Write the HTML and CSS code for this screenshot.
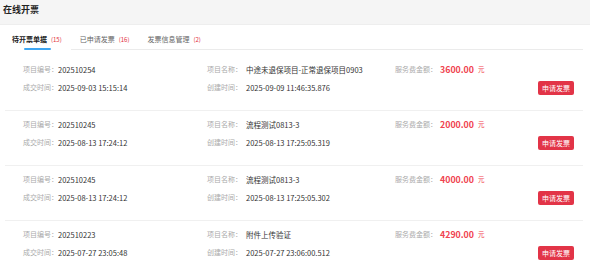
FILE: index.html
```html
<!DOCTYPE html>
<html lang="zh-CN">
<head>
<meta charset="utf-8">
<title>在线开票</title>
<link rel="stylesheet" href="styles.css">
</head>
<body>
<div class="header"><h1 class="title">在线开票</h1></div>
<div class="content">
  <div class="tabs">
    <div class="tab active">待开票单据<span class="count">(15)</span></div>
    <div class="tab">已申请发票<span class="count">(16)</span></div>
    <div class="tab">发票信息管理<span class="count">(2)</span></div>
    <div class="tab-fill"></div>
  </div>
  <div class="list">
    <div class="row">
      <div class="cell c1"><span class="label">项目编号：</span><span class="val">202510254</span></div>
      <div class="cell c2"><span class="label l2">项目名称：</span><span class="val">中途未退保项目-正常退保项目0903</span></div>
      <div class="cell c3"><span class="label">服务费金额：</span><span class="amount">3600.00</span><span class="unit">元</span></div>
      <div class="cell c4"></div>
      <div class="cell c1"><span class="label">成交时间：</span><span class="val">2025-09-03 15:15:14</span></div>
      <div class="cell c2"><span class="label l2">创建时间：</span><span class="val">2025-09-09 11:46:35.876</span></div>
      <div class="cell c3"></div>
      <div class="cell c4"><button class="btn">申请发票</button></div>
    </div>
    <div class="row">
      <div class="cell c1"><span class="label">项目编号：</span><span class="val">202510245</span></div>
      <div class="cell c2"><span class="label l2">项目名称：</span><span class="val">流程测试0813-3</span></div>
      <div class="cell c3"><span class="label">服务费金额：</span><span class="amount">2000.00</span><span class="unit">元</span></div>
      <div class="cell c4"></div>
      <div class="cell c1"><span class="label">成交时间：</span><span class="val">2025-08-13 17:24:12</span></div>
      <div class="cell c2"><span class="label l2">创建时间：</span><span class="val">2025-08-13 17:25:05.319</span></div>
      <div class="cell c3"></div>
      <div class="cell c4"><button class="btn">申请发票</button></div>
    </div>
    <div class="row">
      <div class="cell c1"><span class="label">项目编号：</span><span class="val">202510245</span></div>
      <div class="cell c2"><span class="label l2">项目名称：</span><span class="val">流程测试0813-3</span></div>
      <div class="cell c3"><span class="label">服务费金额：</span><span class="amount">4000.00</span><span class="unit">元</span></div>
      <div class="cell c4"></div>
      <div class="cell c1"><span class="label">成交时间：</span><span class="val">2025-08-13 17:24:12</span></div>
      <div class="cell c2"><span class="label l2">创建时间：</span><span class="val">2025-08-13 17:25:05.302</span></div>
      <div class="cell c3"></div>
      <div class="cell c4"><button class="btn">申请发票</button></div>
    </div>
    <div class="row">
      <div class="cell c1"><span class="label">项目编号：</span><span class="val">202510223</span></div>
      <div class="cell c2"><span class="label l2">项目名称：</span><span class="val">附件上传验证</span></div>
      <div class="cell c3"><span class="label">服务费金额：</span><span class="amount">4290.00</span><span class="unit">元</span></div>
      <div class="cell c4"></div>
      <div class="cell c1"><span class="label">成交时间：</span><span class="val">2025-07-27 23:05:48</span></div>
      <div class="cell c2"><span class="label l2">创建时间：</span><span class="val">2025-07-27 23:06:00.512</span></div>
      <div class="cell c3"></div>
      <div class="cell c4"><button class="btn">申请发票</button></div>
    </div>
  </div>
</div>
</body>
</html>
```
FILE: styles.css
```css
* { box-sizing: border-box; }
html, body { margin: 0; padding: 0; background: #fff; }
body {
  font-family: "Noto Sans CJK SC", "Noto Sans", sans-serif;
  color: #333;
  width: 590px;
  height: 271px;
  overflow: hidden;
}
.header {
  background: #f5f5f5;
  height: 25px;
  border-bottom: 1px solid #eeeeee;
  padding: 0 3px;
}
.title {
  margin: 0;
  font-size: 9px;
  line-height: 19px;
  font-weight: bold;
  color: #222;
}
.content { padding: 0 7px 0 3px; }
.tabs {
  display: flex;
  padding-top: 7px;
}
.tab {
  position: relative;
  padding: 0 9px 2px;
  font-size: 7px;
  line-height: 15px;
  color: #666;
  border-bottom: 1px solid #ebebeb;
  white-space: nowrap;
}
.tab.active {
  color: #222;
  font-weight: bold;
  border-bottom-color: transparent;
}
.tab.active::after {
  content: "";
  position: absolute;
  left: 21px;
  width: 27px;
  bottom: -1px;
  height: 2px;
  background: #3ea6f2;
  border-radius: 1px;
}
.tab-fill { flex: 1; border-bottom: 1px solid #ebebeb; }
.count {
  font-size: 6px;
  color: #e2303d;
  margin-left: 4px;
  font-weight: normal;
}
.list { margin-top: 6px; padding-left: 2px; }
.row {
  display: grid;
  grid-template-columns: 184px 188px 1fr 45px;
  grid-template-rows: 16px 16px;
  row-gap: 2px;
  padding: 5px 0 15px 18px;
  border-bottom: 1px solid #f0f0f0;
}
.cell {
  display: flex;
  align-items: center;
  font-size: 7.5px;
  white-space: nowrap;
}
.label { color: #aaa; font-size: 7px; }
.l2 { width: 39px; }
.val { color: #333; }
.amount {
  margin-left: 3px;
  color: #f0434f;
  font-weight: bold;
  font-size: 8.8px;
}
.unit { color: #f0434f; font-size: 6.5px; margin-left: 4px; }
.c4 { justify-content: flex-start; }
.btn {
  margin-top: 2px;
  border: none;
  border-radius: 2px;
  background: #e23447;
  color: #fff;
  font-family: inherit;
  font-size: 7px;
  width: 36px;
  height: 14px;
  padding: 0;
  line-height: 14px;
}
```
